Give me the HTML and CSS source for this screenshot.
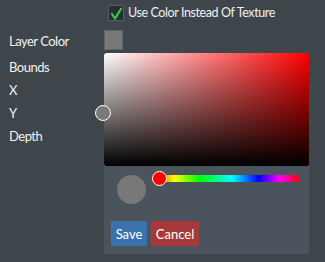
FILE: index.html
```html
<!DOCTYPE html>
<html>
<head>
<meta charset="utf-8">
<link rel="stylesheet" href="styles.css">
</head>
<body>
<div class="checkrow">
  <span class="checkbox">
    <svg width="14" height="14" viewBox="0 0 14 14"><polyline points="3,8 6,12.5 12,3" fill="none" stroke="#30d04a" stroke-width="2.2" stroke-linecap="round" stroke-linejoin="round"/></svg>
  </span>
  <span class="checklabel">Use Color Instead Of Texture</span>
</div>
<div class="form">
  <div class="labels">
    <div class="lbl first">Layer Color</div>
    <div class="lbl">Bounds</div>
    <div class="lbl">X</div>
    <div class="lbl">Y</div>
    <div class="lbl">Depth</div>
  </div>
  <div class="editor">
    <div class="swatch"></div>
    <div class="picker">
      <div class="sv">
        <div class="sv-white"></div>
        <div class="sv-black"></div>
        <div class="sv-handle"></div>
      </div>
      <div class="controls">
        <div class="huerow">
          <div class="preview"></div>
          <div class="hue">
            <div class="hue-handle"></div>
          </div>
        </div>
        <div class="buttons">
          <button class="btn save">Save</button>
          <button class="btn cancel">Cancel</button>
        </div>
      </div>
    </div>
  </div>
</div>
</body>
</html>
```

FILE: styles.css
```css
html, body {
  margin: 0;
  padding: 0;
  background: #3e454b;
  width: 325px;
  height: 262px;
  overflow: hidden;
  font-family: Lato, "Noto Sans", sans-serif;
  color: #f2f2f2;
}
.checkrow {
  display: flex;
  align-items: center;
  padding: 5px 0 0 108px;
  height: 16px;
}
.checkbox {
  box-sizing: border-box;
  width: 16px;
  height: 16px;
  background: #2a2f33;
  border: 1px solid #555c62;
  display: flex;
  align-items: center;
  justify-content: center;
}
.checklabel {
  font-size: 12.5px;
  letter-spacing: -0.4px;
  margin-left: 4px;
  line-height: 16px;
}
.form {
  display: grid;
  grid-template-columns: 104px 205px;
  margin-top: 9px;
}
.labels {
  padding-left: 9px;
}
.lbl {
  font-size: 13px;
  letter-spacing: -0.5px;
  line-height: 23px;
}
.lbl.first {
  margin-bottom: 3px;
}
.swatch {
  box-sizing: border-box;
  width: 19px;
  height: 20px;
  background: #787878;
  border: 1px solid #5d6469;
  margin-bottom: 3px;
}
.picker {
  background: #4b545c;
  border-radius: 3px 3px 0 0;
}
.sv {
  position: relative;
  height: 113px;
  background: #ff0000;
  border-radius: 3px 3px 2px 2px;
}
.sv-white {
  position: absolute;
  inset: 0;
  border-radius: inherit;
  background: linear-gradient(to right, #ffffff, rgba(255,255,255,0));
}
.sv-black {
  position: absolute;
  inset: 0;
  border-radius: inherit;
  background: linear-gradient(to bottom, rgba(0,0,0,0), #000000);
}
.sv-handle {
  position: absolute;
  left: -9px;
  top: 52px;
  box-sizing: border-box;
  width: 16px;
  height: 16px;
  border-radius: 50%;
  border: 1.5px solid #ffffff;
  background: #7a7a7a;
}
.controls {
  padding: 9px 9px 8px 7px;
}
.huerow {
  display: flex;
  align-items: flex-start;
}
.preview {
  width: 29px;
  height: 29px;
  border-radius: 50%;
  background: #787878;
  margin-left: 6px;
}
.hue {
  position: relative;
  flex: 1;
  height: 7px;
  margin-left: 6px;
  border-radius: 4px;
  background: linear-gradient(to right, #ff0000 0%, #ffff00 15%, #00ff00 32%, #00ffff 54%, #0000ff 72%, #ff00ff 86%, #ff0000 100%);
}
.hue-handle {
  position: absolute;
  left: 0;
  top: -4px;
  box-sizing: border-box;
  width: 15px;
  height: 15px;
  border-radius: 50%;
  border: 1.5px solid #ffffff;
  background: #ff0000;
}
.buttons {
  display: flex;
  gap: 4px;
  margin-top: 17px;
}
.btn {
  border: none;
  height: 25px;
  padding: 0;
  font-family: Lato, "Noto Sans", sans-serif;
  font-size: 13px;
  color: #ffffff;
  border-radius: 0;
}
.save {
  background: #3b71ad;
  width: 36px;
}
.cancel {
  background: #a63a3b;
  width: 48px;
}
```
